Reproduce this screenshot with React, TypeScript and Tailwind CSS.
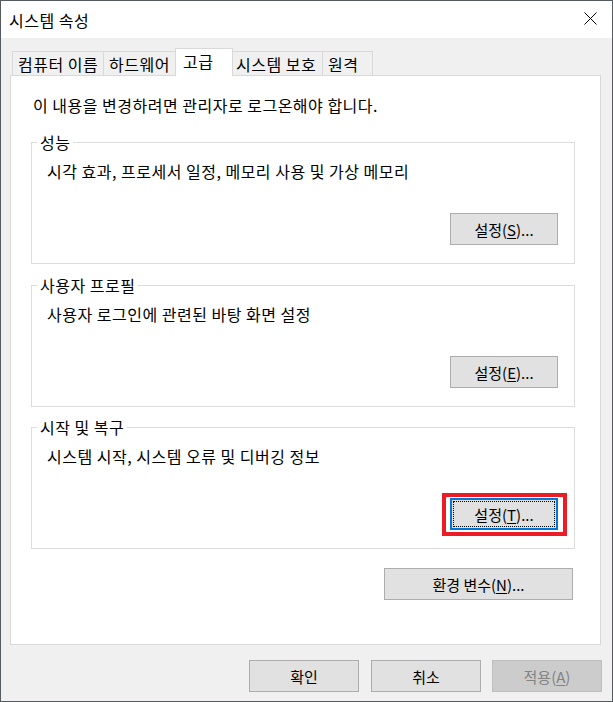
import React from 'react';

const font = { fontFamily: '"Noto Sans CJK KR", "Noto Sans", sans-serif' };

interface Tab {
  label: string;
  width: string;
  selected?: boolean;
}

const tabs: Tab[] = [
  { label: '컴퓨터 이름', width: 'w-[92px]' },
  { label: '하드웨어', width: 'w-[73px] -ml-px' },
  { label: '고급', width: 'w-[58px] -ml-px', selected: true },
  { label: '시스템 보호', width: 'w-[93px] -ml-[3px]' },
  { label: '원격', width: 'w-[51px] -ml-px' },
];

interface Group {
  title: string;
  text: string;
  key: string;
  gap: string;
  focused?: boolean;
}

const groups: Group[] = [
  { title: '성능', text: '시각 효과, 프로세서 일정, 메모리 사용 및 가상 메모리', key: 'S', gap: 'mt-[27px]' },
  { title: '사용자 프로필', text: '사용자 로그인에 관련된 바탕 화면 설정', key: 'E', gap: 'mt-[21px]' },
  { title: '시작 및 복구', text: '시스템 시작, 시스템 오류 및 디버깅 정보', key: 'T', gap: 'mt-[20px]', focused: true },
];

const Label: React.FC<{ text: string; hotkey?: string; suffix?: string }> = ({ text, hotkey, suffix = '' }) => (
  <span className="whitespace-nowrap">
    {text}
    {hotkey && (
      <>
        (<span className="underline underline-offset-2">{hotkey}</span>)
      </>
    )}
    {suffix}
  </span>
);

const SettingsButton: React.FC<{ hotkey: string; focused?: boolean }> = ({ hotkey, focused }) => {
  if (focused) {
    // red annotation box around the focused button
    return (
      <div className="-mt-[5px] -mb-[6px] -ml-[8px] -mr-[9px] border-4 border-[#ed1c24] bg-white pt-[1px] pl-[4px] pr-[5px] pb-[2px]">
        <div className="w-[108px] h-[32px] border-2 border-[#0078d7] bg-[#e1e1e1] p-[1px]">
          <div className="h-full border border-dotted border-black flex items-center justify-center text-[15px] leading-none">
            <Label text="설정" hotkey={hotkey} suffix="..." />
          </div>
        </div>
      </div>
    );
  }
  return (
    <div className="w-[108px] h-[32px] border border-[#adadad] bg-[#e1e1e1] flex items-center justify-center text-[15px] leading-none">
      <Label text="설정" hotkey={hotkey} suffix="..." />
    </div>
  );
};

const GroupBox: React.FC<{ group: Group }> = ({ group }) => (
  <div className={`border border-[#dcdcdc] pb-[18px] pr-[16px] ${group.gap}`}>
    <div className="-mt-[11px] ml-[5px] px-[3px] w-fit bg-white leading-[20px] text-[16px] tracking-[0.5px]">{group.title}</div>
    <div className="mt-[9px] pl-[15px] leading-[20px] text-[16px] tracking-[0.5px]">{group.text}</div>
    <div className="mt-[32px] flex justify-end">
      <SettingsButton hotkey={group.key} focused={group.focused} />
    </div>
  </div>
);

const DialogButton: React.FC<{ children: React.ReactNode; disabled?: boolean; className?: string }> = ({
  children,
  disabled,
  className = '',
}) => (
  <div
    className={`w-[110px] h-[32px] border flex items-center justify-center text-[15px] leading-none ${className} ${
      disabled ? 'border-[#bfbfbf] bg-[#cccccc] text-[#838383]' : 'border-[#adadad] bg-[#e1e1e1] text-black'
    }`}
  >
    {children}
  </div>
);

export default function App() {
  return (
    <div className="w-[613px] h-[702px] border border-[#555a61] bg-[#f0f0f0] flex flex-col text-black" style={font}>
      {/* title bar */}
      <div className="h-[37px] bg-white flex items-center justify-between pl-[8px]">
        <span className="text-[16px] leading-[20px] tracking-[0.5px]">시스템 속성</span>
        <svg width="13" height="13" viewBox="0 0 13 13" className="mr-[15px] -mt-[2px]">
          <path d="M0.5 0.5L12.5 12.5M12.5 0.5L0.5 12.5" stroke="#000" strokeWidth="1" fill="none" />
        </svg>
      </div>

      {/* tabs */}
      <div className="mt-[10px] ml-[11px] h-[27px] flex items-end">
        {tabs.map(tab => (
          <div
            key={tab.label}
            className={`${tab.width} border-t border-l border-r border-[#d9d9d9] pl-[5px] text-[16px] tracking-[0.5px] leading-[20px] flex items-center whitespace-nowrap ${
              tab.selected ? 'h-[28px] bg-white relative z-10 -mb-px pl-[7px] pb-[3px]' : 'h-[24px] bg-[#f0f0f0]'
            }`}
          >
            {tab.label}
          </div>
        ))}
      </div>

      {/* panel */}
      <div className="ml-[9px] mr-[11px] h-[570px] border border-[#d9d9d9] bg-white pl-[20px] pr-[25px] pt-[19px]">
        <div className="pl-[2px] leading-[20px] text-[16px] tracking-[0.5px]">이 내용을 변경하려면 관리자로 로그온해야 합니다.</div>
        {groups.map(g => (
          <GroupBox key={g.title} group={g} />
        ))}
        <div className="mt-[19px] flex justify-end pr-[2px]">
          <div className="w-[189px] h-[32px] border border-[#adadad] bg-[#e1e1e1] flex items-center justify-center text-[15px] leading-none">
            <Label text="환경 변수" hotkey="N" suffix="..." />
          </div>
        </div>
      </div>

      {/* footer buttons */}
      <div className="mt-[15px] flex justify-end pr-[10px]">
        <DialogButton>확인</DialogButton>
        <DialogButton className="ml-[12px]">취소</DialogButton>
        <DialogButton className="ml-[11px]" disabled>
          <Label text="적용" hotkey="A" />
        </DialogButton>
      </div>
    </div>
  );
}
